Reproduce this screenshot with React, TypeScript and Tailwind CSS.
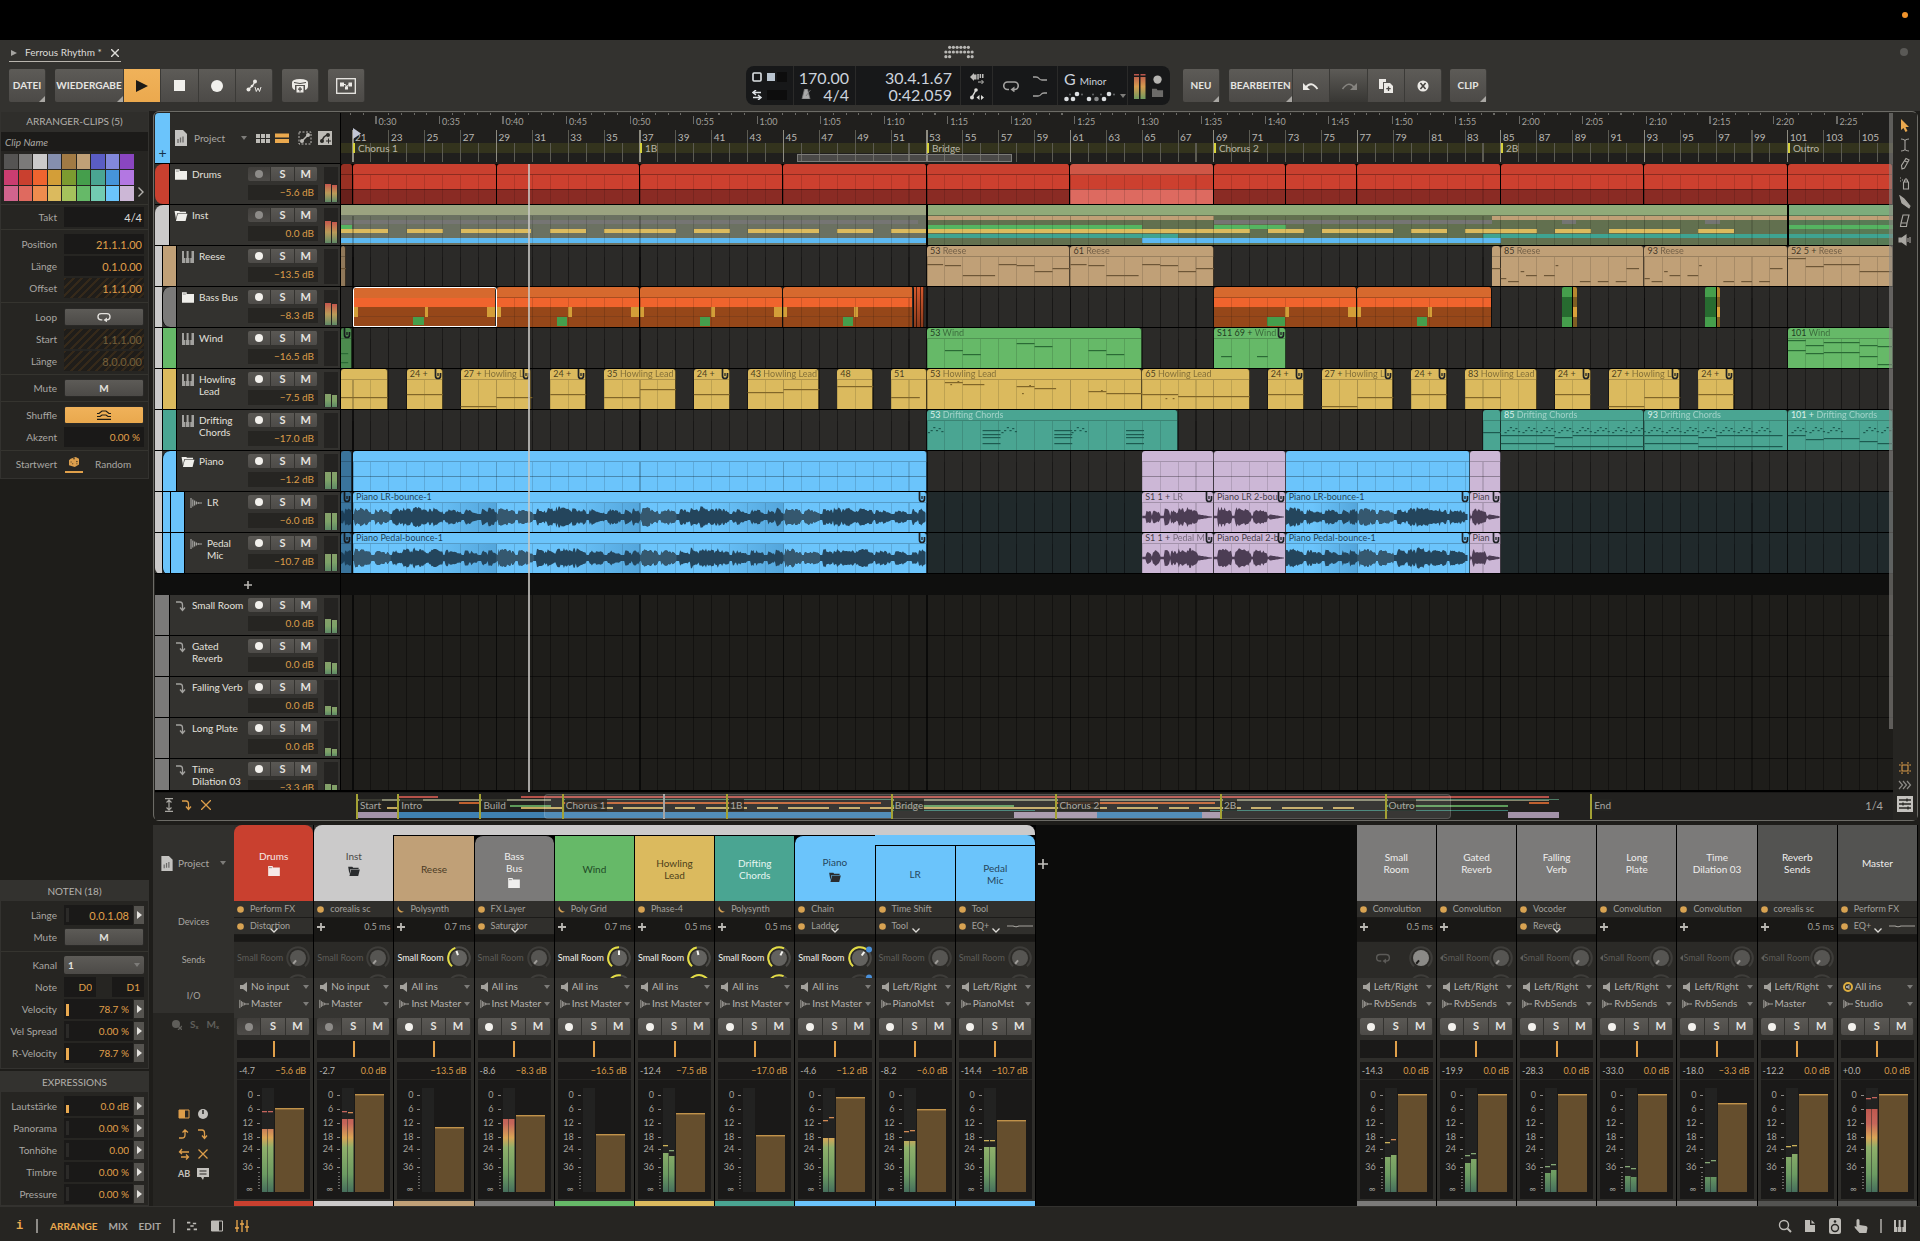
import React from "react";
import clsx from "clsx";

/* ------------------------------------------------------------------ */
/* Timeline geometry                                                    */
/* ------------------------------------------------------------------ */

const FIRST_BAR = 20.33;
const BAR_SPAN = 86.53;
const LAST_BAR = FIRST_BAR + BAR_SPAN;

const pct = (bar: number) => `${((bar - FIRST_BAR) / BAR_SPAN) * 100}%`;
const span = (bars: number) => `${(bars / BAR_SPAN) * 100}%`;

const C = {
  red: "#c9402f",
  silver: "#cbcaca",
  tan: "#c0a077",
  gray: "#7b7a79",
  green: "#66b968",
  yellow: "#dbba5e",
  teal: "#4aa592",
  blue: "#6bc4fb",
  lilac: "#ccb7d6",
  dark: "#535351",
};

interface Clip {
  from: number;
  to: number;
  num?: string;
  name?: string;
  color?: string;
  dim?: boolean;
  clip?: boolean;
}

type Note = [number, number, number];

/* ------------------------------------------------------------------ */
/* Icons                                                                */
/* ------------------------------------------------------------------ */

type IconProps = { className?: string };

const Folder = ({ className = "w-3.5 h-3" }: IconProps) => (
  <svg viewBox="0 0 14 12" className={className} fill="currentColor">
    <path d="M0 0h5.500v1.800h8.500V12H0z" />
    <path d="M1 2h3.500" stroke="#333" strokeWidth="0.600" />
  </svg>
);

const FolderOpen = ({ className = "w-3.5 h-3" }: IconProps) => (
  <svg viewBox="0 0 14 12" className={className} fill="currentColor">
    <path d="M0 1h5l1 1h6.500v1.500H2.800L1.500 10z" />
    <path d="M3.500 4.200H14L12 12H1.500z" />
  </svg>
);

const Keys = ({ className = "w-3 h-3" }: IconProps) => (
  <svg viewBox="0 0 12 12" className={className} fill="currentColor">
    <path d="M0 0h2v7h1v5H0zM3.600 7h1.200v5H3.600zM4.600 0h2v7h.8v5H4V7h.6zM9.500 0H12v12H8.300V7h1.200z" />
  </svg>
);

const Wave = ({ className = "w-3 h-3" }: IconProps) => (
  <svg viewBox="0 0 12 12" className={className} stroke="currentColor" strokeWidth="1.200">
    <path d="M1 1v10M2.800 2.500v7M4.600 3.500v5M6.400 4.500v3M8.200 5v2M9 6h3" />
  </svg>
);

const Return = ({ className = "w-3 h-3" }: IconProps) => (
  <svg viewBox="0 0 12 12" className={className} fill="none" stroke="currentColor" strokeWidth="1.300">
    <path d="M1 2h4q2.500 0 2.500 3v5M5 7.500L7.500 10.500 10 7.500" />
  </svg>
);

const LoopIcon = ({ className = "w-4 h-3" }: IconProps) => (
  <svg viewBox="0 0 16 12" className={className} fill="none" stroke="currentColor" strokeWidth="1.600">
    <path d="M6 9.500H4.500a3.500 3.500 0 0 1 0-7.500h7a3.500 3.500 0 0 1 0 7.500H10" />
    <path d="M11.500 6.500v6L7.500 9.500z" fill="currentColor" stroke="none" />
  </svg>
);

const ProjectIcon = ({ className = "w-3.5 h-4" }: IconProps) => (
  <svg viewBox="0 0 14 16" className={className} fill="#c4c3c0">
    <path d="M1 0h8l4 4v12H1z" />
    <path d="M4 9v4M6.500 7.500v5M9 6.500v6" stroke="#6a6967" strokeWidth="1.300" />
  </svg>
);

const Caret = () => (
  <svg viewBox="0 0 6 4" className="h-1 w-1.5 shrink-0" fill="#7d7c79">
    <path d="M0 0h6L3 4z" />
  </svg>
);

const Speaker = ({ className = "h-2.5 w-2" }: IconProps) => (
  <svg viewBox="0 0 8 10" className={className} fill="currentColor">
    <path d="M0 3h3l4-3v10L3 7H0z" />
  </svg>
);

const DotsLogo = () => {
  const rows = ["01111110", "11111111", "11000011"];
  return (
    <svg viewBox="0 0 32 16" className="h-4 w-[30px]" fill="#b9b8b5">
      {rows.map((row, y) =>
        row.split("").map((c, x) => c === "1" && <circle key={`${x}${y}`} cx={2 + x * 4} cy={3 + y * 5} r={1.7} />)
      )}
    </svg>
  );
};

/* ------------------------------------------------------------------ */
/* Header                                                               */
/* ------------------------------------------------------------------ */

const TOOL_BTN =
  "flex h-[33px] items-center justify-center border-r border-[#3b3a37] bg-linear-to-b from-[#5d5b57] to-[#4c4a47] text-[10px] font-bold text-[#e6e5e2]";

const ToolButton: React.FC<{ label: string; className?: string; corner?: boolean; children?: React.ReactNode }> = ({
  label,
  className,
  corner,
  children,
}) => (
  <button aria-label={label} className={clsx(TOOL_BTN, "relative", className)}>
    {children ?? label}
    {corner && (
      <svg viewBox="0 0 6 6" className="absolute right-0 bottom-0 h-1.5 w-1.5" fill="#a9a7a3">
        <path d="M6 0v6H0z" />
      </svg>
    )}
  </button>
);

const Display: React.FC = () => (
  <div className="flex h-[39px] items-stretch rounded-lg bg-[#171819] text-base leading-[17px] text-[#ccd3dc]">
    <div className="flex w-12 flex-col justify-center gap-2 border-r border-[#2a2a29] pl-1.5">
      <svg viewBox="0 0 36 10" className="h-2.5 w-9">
        <rect x="1" y="1" width="8" height="8" rx="1" fill="none" stroke="#dfe3e6" strokeWidth="1.600" />
        <rect x="15" y="1" width="8" height="8" fill="#b9c4cf" />
        <rect x="25" y="0" width="10" height="10" fill="#0d0d0d" />
      </svg>
      <svg viewBox="0 0 36 10" className="h-2.5 w-9">
        <path d="M9 2.500H2M4 0L1 2.500 4 5M1 7.500h8M6 5l3 2.500L6 10" fill="none" stroke="#dfe3e6" strokeWidth="1.500" />
        <rect x="15" y="0" width="20" height="10" fill="#0d0d0d" />
      </svg>
    </div>
    <div className="flex w-[62px] flex-col justify-center border-r border-[#2a2a29] pr-1.5 text-right">
      <span>170.00</span>
      <span className="flex items-center justify-end gap-3">
        <svg viewBox="0 0 10 10" className="h-2.5 w-2.5" fill="#aaa">
          <path d="M3.500 0h3L9 10H1zM5 7L9.500 1" stroke="#777" strokeWidth="0.800" />
        </svg>
        4/4
      </span>
    </div>
    <div className="flex w-[105px] flex-col justify-center border-r border-[#2a2a29] pr-2 text-right">
      <span>30.4.1.67</span>
      <span>0:42.059</span>
    </div>
    <div className="flex w-8 flex-col items-center justify-center gap-1 border-r border-[#2a2a29]">
      <svg viewBox="0 0 14 12" className="h-3 w-3.5" fill="#bdbcb9">
        <path d="M0 5l4-4v8zM4 2.500h2.500v5H4zM7.300 2h1.500v5.500H7.300zM9.600 2h1.500v4H9.600zM12 2h1.500v4H12z" />
        <path d="M8 10h5M11.500 8l2 2-2 2" fill="none" stroke="#bdbcb9" />
      </svg>
      <svg viewBox="0 0 14 12" className="h-3 w-3.5" fill="#dcdbd8">
        <path d="M1.500 10L6 2" stroke="#dcdbd8" strokeWidth="1.500" />
        <circle cx="2" cy="9.500" r="2" />
        <circle cx="6" cy="2" r="1.800" />
        <path d="M6.500 9.500l3-2.500v5zM14 9.500L11 7v5z" />
      </svg>
    </div>
    <div className="flex w-[65px] items-center justify-between border-r border-[#2a2a29] px-2.5 text-[#a4a3a1]">
      <LoopIcon />
      <svg viewBox="0 0 14 26" className="h-[26px] w-3.5" fill="none" stroke="currentColor" strokeWidth="1.300">
        <path d="M0 4h3q2 0 3 1.500T9 7h5M0 23h5q2 0 3-1.500T11 20h3" />
      </svg>
    </div>
    <div className="flex w-[70px] flex-col justify-center border-r border-[#2a2a29] pl-1.5">
      <span>
        G <span className="text-[10px]">Minor</span>
      </span>
      <span className="flex items-center gap-1">
        <svg viewBox="0 0 52 12" className="h-3 w-[52px]" fill="#dcdfe2">
          {[2.5, 9, 25, 40].map((x) => (
            <circle key={x} cx={x} cy={9} r={2.3} />
          ))}
          <circle cx={32.5} cy={9} r={2.3} fill="#88898a" />
          <circle cx={13} cy={4} r={2.3} />
          <circle cx={45} cy={4} r={2.3} />
          {[6, 18, 29, 37, 50].map((x) => (
            <circle key={x} cx={x} cy={4.5} r={1} fill="#66686a" />
          ))}
        </svg>
        <Caret />
      </span>
    </div>
    <div className="flex w-[42px] items-center justify-between px-1.5">
      <svg viewBox="0 0 12 26" className="h-[26px] w-3">
        <defs>
          <linearGradient id="dispMeter" x2="0" y2="1">
            <stop offset="0" stopColor="#b9534c" />
            <stop offset="0.500" stopColor="#d59b4e" />
            <stop offset="1" stopColor="#6f9b5f" />
          </linearGradient>
        </defs>
        <path d="M0 4h5v22H0zM6.500 4h5v22h-5zM0 1h5v1.500H0zM6.500 1h5v1.500h-5z" fill="url(#dispMeter)" />
      </svg>
      <svg viewBox="0 0 13 26" className="h-[26px] w-3">
        <circle cx="6" cy="6" r="4.500" fill="#b5b4b1" />
        <path d="M0 16h5l1 1.500h6V25H0z" fill="#6c6b69" />
      </svg>
    </div>
  </div>
);

const Header: React.FC = () => (
  <header className="flex h-[71px] shrink-0 flex-col bg-[#33322f] pt-1">
    <div className="grid h-[22px] grid-cols-[1fr_auto_1fr] items-start pr-3 pl-[9px]">
      <div className="flex h-[18px] w-28 items-center gap-2 border-b border-[#b9b5ae] pl-0.5 text-[10px] text-[#dddcd8]">
        <svg viewBox="0 0 6 6" className="h-1.5 w-1.5" fill="#a5a4a1">
          <path d="M0 0l6 3-6 3z" />
        </svg>
        <span className="whitespace-nowrap">Ferrous Rhythm *</span>
        <button aria-label="Close project" className="ml-px text-[#dddcd8]">
          <svg viewBox="0 0 8 8" className="h-2 w-2" stroke="currentColor" strokeWidth="1.400">
            <path d="M0 0l8 8M8 0L0 8" />
          </svg>
        </button>
      </div>
      <DotsLogo />
      <span className="mt-1 h-2 w-2 justify-self-end rounded-full bg-[#5a5956]" />
    </div>
    <div className="grid grid-cols-[746px_auto_1fr] items-center">
      <div className="flex items-center pl-[9px]">
        <ToolButton label="DATEI" corner className="w-[37px] rounded-xs" />
        <ToolButton label="WIEDERGABE" corner className="ml-[9px] w-[69px] rounded-l-xs" />
        <ToolButton label="Play" className="w-[37px] from-[#f0b25a] to-[#eba94e]">
          <svg viewBox="0 0 12 12" className="h-3 w-3" fill="#1c1a16">
            <path d="M0 0l12 6-12 6z" />
          </svg>
        </ToolButton>
        <ToolButton label="Stop" className="w-[38px]">
          <span className="h-[11px] w-[11px] bg-[#f1f0ec]" />
        </ToolButton>
        <ToolButton label="Record" className="w-[37px]">
          <span className="h-3 w-3 rounded-full bg-[#f1f0ec]" />
        </ToolButton>
        <ToolButton label="Automation write" className="w-[37px] rounded-r-xs">
          <svg viewBox="0 0 16 14" className="h-3.5 w-4" fill="#eceae6">
            <path d="M2 11l5-5 2-3.500" fill="none" stroke="#eceae6" strokeWidth="1.300" />
            <circle cx="2.500" cy="10.500" r="2" />
            <circle cx="6" cy="7" r="1.300" />
            <circle cx="9" cy="2.500" r="2" />
            <path d="M9 8l1.300 4.500L12 9l1.500 3.500L15 8" fill="none" stroke="#eceae6" />
          </svg>
        </ToolButton>
        <ToolButton label="Overdub" className="ml-[9px] w-[37px] rounded-xs">
          <svg viewBox="0 0 18 14" className="h-3.5 w-[18px]" fill="#eceae6">
            <path d="M1 3.500Q1 0 9 0t8 3.500V7q0 3-3 4V6H4v5Q1 10 1 7z" />
            <path d="M3 3.500q6 2 12 0" stroke="#4c4a47" fill="none" />
            <path d="M5.500 7h7v6.500h-7z" />
            <path d="M9 8v4.500M7 10.200h4" stroke="#4c4a47" strokeWidth="1.200" />
          </svg>
        </ToolButton>
        <ToolButton label="Mappings" className="ml-[9px] w-[37px] rounded-xs">
          <svg viewBox="0 0 20 16" className="h-4 w-5" fill="#eceae6">
            <rect x="0.700" y="0.700" width="18.600" height="14.600" fill="none" stroke="#eceae6" strokeWidth="1.300" />
            <path d="M4 4.500h4v4H4zM9 8.500h3v3H9zM12.500 4.500h3.500v4h-3.500z" />
            <path d="M8 6.500h1.500l1 2.500 2-2.500" stroke="#eceae6" fill="none" />
          </svg>
        </ToolButton>
      </div>
      <Display />
      <div className="flex items-center pl-[13px]">
        <ToolButton label="NEU" corner className="w-[37px] rounded-xs" />
        <ToolButton label="BEARBEITEN" corner className="ml-[9px] w-16 rounded-l-xs" />
        <ToolButton label="Undo" className="w-[37px]">
          <svg viewBox="0 0 16 10" className="h-2.5 w-4" fill="none" stroke="#eceae6" strokeWidth="1.800">
            <path d="M2.500 7Q8-1 14.500 8" />
            <path d="M0 2v7h7z" fill="#eceae6" stroke="none" />
          </svg>
        </ToolButton>
        <ToolButton label="Redo" className="w-[38px] from-[#3c3b38] to-[#383734]">
          <svg viewBox="0 0 16 10" className="h-2.5 w-4" fill="none" stroke="#85837f" strokeWidth="1.600">
            <path d="M13.500 7Q8-1 1.500 8" />
            <path d="M16 2v7H9z" fill="#85837f" stroke="none" />
          </svg>
        </ToolButton>
        <ToolButton label="Duplicate" className="w-[37px]">
          <svg viewBox="0 0 14 14" className="h-3.5 w-3.5" fill="#eceae6">
            <path d="M0 0h7v3H4v7H0z" />
            <path d="M5 4h6l3 3v7H5z" />
            <path d="M9.500 7.500v4.500M7.300 9.700h4.400" stroke="#4c4a47" strokeWidth="1.300" />
          </svg>
        </ToolButton>
        <ToolButton label="Delete" className="w-[37px] rounded-r-xs">
          <svg viewBox="0 0 14 14" className="h-3 w-3">
            <circle cx="7" cy="7" r="6.500" fill="#eceae6" />
            <path d="M4 3.500l6 7M10 3.500l-6 7" stroke="#45433f" strokeWidth="1.800" />
          </svg>
        </ToolButton>
        <ToolButton label="CLIP" corner className="ml-2 w-[37px] rounded-xs" />
      </div>
    </div>
  </header>
);

/* ------------------------------------------------------------------ */
/* Inspector                                                            */
/* ------------------------------------------------------------------ */

const PALETTE = [
  "#555453", "#7b7a79", "#cbcaca", "#858fae", "#a17a44", "#c0a077", "#5a5dc5", "#8288dc", "#8a46c0",
  "#ca3d70", "#c9402f", "#ef642f", "#d39e38", "#7c9b30", "#459e4c", "#4aa592", "#4694da", "#b377e2",
  "#d0648d", "#df6a5f", "#ee8c4e", "#dbba5e", "#a5c25c", "#66b968", "#72cbb2", "#6bc4fb", "#ccb7d6",
];

const HATCH = "bg-[repeating-linear-gradient(135deg,#35291a_0px,#35291a_2px,#1f1d1a_2px,#1f1d1a_6px)]";

const Row: React.FC<{ label: string; children: React.ReactNode }> = ({ label, children }) => (
  <label className="flex h-[22px] items-center text-[#a9a7a2]">
    <span className="w-14 shrink-0 text-right">{label}</span>
    <span className="ml-[7px] flex min-w-0 flex-1 items-center">{children}</span>
  </label>
);

const Value: React.FC<{
  value: string;
  hatch?: boolean;
  dim?: boolean;
  white?: boolean;
  mono?: boolean;
  inset?: boolean;
}> = ({ value, hatch, dim, white, mono, inset }) => (
  <input
    defaultValue={value}
    className={clsx(
      "h-5 w-full min-w-0 flex-1 text-right outline-none",
      inset ? "pr-1" : "pr-0.5",
      mono ? "text-[11px]" : "text-[10px]",
      hatch ? HATCH : "bg-[#1a1918]",
      dim ? "text-[#75603a]" : white ? "text-[#dedcd8]" : "text-[#e0a04a]"
    )}
  />
);

const PANEL_BTN =
  "flex h-[18px] flex-1 items-center justify-center rounded-xs border border-[#2a2927] bg-linear-to-b from-[#5d5b57] to-[#4c4a47] font-bold text-[#e4e2de]";

const Divider = () => <hr className="border-t border-[#35342f]" />;

const Stepper: React.FC<{ label: string }> = ({ label }) => (
  <button aria-label={`${label} modulate`} className="ml-px flex h-[18px] w-2.5 shrink-0 items-center justify-center bg-[#55534f]">
    <svg viewBox="0 0 5 8" className="h-2 w-[5px]" fill="#e4e2de">
      <path d="M0 0l5 4-5 4z" />
    </svg>
  </button>
);

const StepRow: React.FC<{ label: string; value: string; bar?: string; mono?: boolean }> = ({ label, value, bar, mono }) => (
  <Row label={label}>
    <span className="flex h-5 w-1.5 shrink-0 items-center bg-[#1a1918] pl-0.5">
      <span className={clsx("flex h-3.5 w-[3px] items-end", bar ? "" : "bg-[#2b2a28]")}>
        {bar && <span className={clsx("w-[3px] bg-[#e9a94f]", bar)} />}
      </span>
    </span>
    <Value value={value} mono={mono} inset />
    <Stepper label={label} />
  </Row>
);

const Inspector: React.FC = () => (
  <aside className="flex w-[153px] shrink-0 flex-col justify-between bg-[#1e1d1a] text-[10px]">
    <section className="mr-1 border border-[#33322f] bg-[#262522]">
      <h2 className="bg-[#2f2e2b] pt-[3px] pb-1 text-center leading-[13px] text-[#b3b1ad]">ARRANGER-CLIPS (5)</h2>
      <input
        aria-label="Clip Name"
        placeholder="Clip Name"
        className="h-[19px] w-full bg-[#1c1b19] px-1 text-[10px] italic outline-none placeholder:text-[#a9a7a2]"
      />
      <div className="flex items-end gap-1 pt-[3px] pb-[3px] pl-[3px]">
        <div className="grid w-[130px] grid-cols-9 gap-px">
          {PALETTE.map((color) => (
            <button key={color} aria-label={`Color ${color}`} className="h-[15px]" style={{ backgroundColor: color }} />
          ))}
        </div>
        <svg viewBox="0 0 6 10" className="mb-1 h-2.5 w-1.5" fill="none" stroke="#b3b1ad" strokeWidth="1.400">
          <path d="M0.500 0.500L5 5 0.500 9.500" />
        </svg>
      </div>
      <Divider />
      <div className="py-px pr-1">
        <Row label="Takt"><Value value="4/4" white mono /></Row>
      </div>
      <Divider />
      <div className="py-[3px] pr-1">
        <Row label="Position"><Value value="21.1.1.00" mono /></Row>
        <Row label="Länge"><Value value="0.1.0.00" mono /></Row>
        <Row label="Offset"><Value value="1.1.1.00" hatch mono /></Row>
      </div>
      <Divider />
      <div className="pt-[3px] pr-1 pb-0.5">
        <Row label="Loop">
          <button aria-label="Loop" className={PANEL_BTN}><LoopIcon className="h-2.5 w-4" /></button>
        </Row>
        <Row label="Start"><Value value="1.1.1.00" hatch dim mono /></Row>
        <Row label="Länge"><Value value="8.0.0.00" hatch dim mono /></Row>
      </div>
      <Divider />
      <div className="py-0.5 pr-1">
        <Row label="Mute"><button className={PANEL_BTN}>M</button></Row>
      </div>
      <Divider />
      <div className="py-0.5 pr-1">
        <Row label="Shuffle">
          <button aria-label="Shuffle" className={clsx(PANEL_BTN, "from-[#f0b25a] to-[#e9a84d]")}>
            <svg viewBox="0 0 16 10" className="h-2.5 w-4" fill="none" stroke="#1f1c16" strokeWidth="1.200">
              <path d="M1 3.500h2l3-2.500h4l3 2.500h2M1 6.500h3l2-1.500h4l2 1.500h3M1 9.300h14" />
            </svg>
          </button>
        </Row>
        <Row label="Akzent"><Value value="0.00 %" inset /></Row>
      </div>
      <Divider />
      <div className="flex h-[27px] items-center text-[#a9a7a2]">
        <span className="w-14 text-right">Startwert</span>
        <button aria-label="Roll seed" className="ml-2 flex w-[18px] flex-col items-center border-b-2 border-[#e0a04a] pb-1">
          <svg viewBox="0 0 12 12" className="h-2.5 w-2.5" fill="#dc9f4d">
            <path d="M2 2l6-2 4 2v7l-5 3-7-2V4z" />
            <path d="M2 6h1M4 8h1M9 5l1 1M9 8h1M5 2h2" stroke="#2a251c" strokeWidth="1.300" />
          </svg>
        </button>
        <button className="ml-3">Random</button>
      </div>
    </section>

    <div className="mr-1 flex flex-col gap-0.5">
      <section className="border border-[#33322f] bg-[#262522]">
        <h2 className="bg-[#33322f] py-1 text-center leading-3 text-[#b3b1ad]">NOTEN (18)</h2>
        <div className="py-[3px] pr-1">
          <StepRow label="Länge" value="0.0.1.08" mono />
          <Row label="Mute"><button className={PANEL_BTN}>M</button></Row>
        </div>
        <Divider />
        <div className="pt-0.5 pr-1 pb-1">
          <Row label="Kanal">
            <select className="h-[18px] w-full appearance-none rounded-xs bg-linear-to-b from-[#5d5b57] to-[#4c4a47] pl-1 font-bold text-[#e4e2de] outline-none">
              <option>1</option>
            </select>
            <span className="-ml-2.5 flex"><Caret /></span>
          </Row>
          <div className="flex h-[22px] items-center text-[#a9a7a2]">
            <span className="w-14 text-right">Note</span>
            <input aria-label="Lowest note" defaultValue="D0" className="ml-[7px] h-5 w-8 bg-[#1a1918] pr-1 text-right text-[#e0a04a] outline-none" />
            <input aria-label="Highest note" defaultValue="D1" className="ml-4 h-5 w-8 bg-[#1a1918] pr-1 text-right text-[#e0a04a] outline-none" />
          </div>
          <StepRow label="Velocity" value="78.7 %" bar="h-3" />
          <StepRow label="Vel Spread" value="0.00 %" />
          <StepRow label="R-Velocity" value="78.7 %" bar="h-3" />
        </div>
      </section>
      <section className="border border-[#33322f] bg-[#262522]">
        <h2 className="bg-[#33322f] py-1 text-center leading-3 text-[#b3b1ad]">EXPRESSIONS</h2>
        <div className="pt-[3px] pr-1">
          <StepRow label="Lautstärke" value="0.0 dB" bar="h-2" />
          <StepRow label="Panorama" value="0.00 %" />
          <StepRow label="Tonhöhe" value="0.00" />
          <StepRow label="Timbre" value="0.00 %" />
          <StepRow label="Pressure" value="0.00 %" />
        </div>
      </section>
    </div>
  </aside>
);

/* ------------------------------------------------------------------ */
/* Track headers                                                        */
/* ------------------------------------------------------------------ */

interface Track {
  name: string;
  db: string;
  color: string;
  level: number;
  icon: "folder" | "open" | "keys" | "wave" | "return";
  unarmed?: boolean;
  first?: boolean;
  last?: boolean;
  meter?: number;
  hot?: boolean;
}

const TRACKS: Track[] = [
  { name: "Drums", db: "−5.6 dB", color: C.red, level: 0, icon: "folder", unarmed: true, meter: 52, hot: true, first: true },
  { name: "Inst", db: "0.0 dB", color: C.silver, level: 0, icon: "open", unarmed: true, meter: 62, hot: true, first: true },
  { name: "Reese", db: "−13.5 dB", color: C.tan, level: 1, icon: "keys" },
  { name: "Bass Bus", db: "−8.3 dB", color: C.gray, level: 1, icon: "folder", meter: 62, hot: true, first: true },
  { name: "Wind", db: "−16.5 dB", color: C.green, level: 1, icon: "keys" },
  { name: "Howling Lead", db: "−7.5 dB", color: C.yellow, level: 1, icon: "keys", meter: 36 },
  { name: "Drifting Chords", db: "−17.0 dB", color: C.teal, level: 1, icon: "keys" },
  { name: "Piano", db: "−1.2 dB", color: C.blue, level: 1, icon: "open", meter: 50, first: true },
  { name: "LR", db: "−6.0 dB", color: C.blue, level: 2, icon: "wave", meter: 50 },
  { name: "Pedal Mic", db: "−10.7 dB", color: C.blue, level: 2, icon: "wave", meter: 50, last: true },
];

const RETURNS: Track[] = [
  { name: "Small Room", db: "0.0 dB", color: C.gray, level: 0, icon: "return", meter: 40 },
  { name: "Gated Reverb", db: "0.0 dB", color: C.gray, level: 0, icon: "return", meter: 34 },
  { name: "Falling Verb", db: "0.0 dB", color: C.gray, level: 0, icon: "return", meter: 26 },
  { name: "Long Plate", db: "0.0 dB", color: C.gray, level: 0, icon: "return", meter: 22 },
  { name: "Time Dilation 03", db: "−3.3 dB", color: C.gray, level: 0, icon: "return", meter: 36 },
];

const ICONS = {
  folder: <Folder className="h-[11px] w-3" />,
  open: <FolderOpen className="h-[11px] w-3.5" />,
  keys: <Keys className="h-3 w-3 text-[#a3a29f]" />,
  wave: <Wave className="h-3 w-3 text-[#a3a29f]" />,
  return: <Return className="h-3 w-3 text-[#a3a29f]" />,
};

const ArmSoloMute: React.FC<{ name: string; unarmed?: boolean; tall?: boolean }> = ({ name, unarmed, tall }) => {
  const cell = clsx(
    "flex flex-1 items-center justify-center border-r border-[#33322f] bg-linear-to-b from-[#5a5854] to-[#4d4b48] text-[11px] font-bold text-[#e6e4e0]",
    tall ? "h-[17px]" : "h-3.5"
  );
  return (
    <div className="flex">
      <button aria-label={`Arm ${name}`} className={clsx(cell, "rounded-l-xs", unarmed && "from-[#413f3c] to-[#3c3b38]")}>
        <span className={clsx("h-2 w-2 rounded-full", unarmed ? "bg-[#8d8b88]" : "bg-[#f3f1ed]")} />
      </button>
      <button aria-label={`Solo ${name}`} className={cell}>S</button>
      <button aria-label={`Mute ${name}`} className={clsx(cell, "rounded-r-xs")}>M</button>
    </div>
  );
};

const TrackHeader: React.FC<{ track: Track; clipped?: boolean }> = ({ track, clipped }) => {
  const { name, db, color, level, icon, meter = 0, hot } = track;
  const top = hot ? "from-[#c4554c] via-[#b99a58]" : "from-[#86a06a] via-[#7da268]";
  return (
    <div className={clsx("flex overflow-hidden border-b border-black bg-[#33322f]", clipped ? "h-[31px] border-b-0" : "h-[41px]")}>
      {level > 0 && <span className={clsx("-mb-px w-[7px] shrink-0 bg-[#cbcaca]", track.last && "rounded-bl-md")} />}
      {level > 1 && (
        <span className={clsx("-mb-px w-2 shrink-0 border-l border-black bg-[#6bc4fb]", track.last && "rounded-bl-md")} />
      )}
      <span
        className={clsx(
          "w-[15px] shrink-0 border-r border-black",
          level > 0 && "border-l",
          track.first && "rounded-tl-lg",
          icon === "folder" && "rounded-bl-lg",
          icon === "open" && "-mb-px"
        )}
        style={{ backgroundColor: color }}
      />
      <span className="ml-1 flex w-3.5 shrink-0 justify-center pt-[5px] text-[#efeeea]">{ICONS[icon]}</span>
      <span className="ml-1 min-w-0 flex-1 pt-1 text-[10px] leading-3 text-[#e3e1dd]">{name}</span>
      <div className="w-[70px] shrink-0 pt-[3px]">
        <ArmSoloMute name={name} unarmed={track.unarmed} />
        <div className="mt-1 h-[15px] bg-[#262522] pr-1 text-right text-[10px] leading-[15px] text-[#dc9d4a]">{db}</div>
      </div>
      <div className="mt-[3px] mr-0.5 ml-1.5 flex h-[35px] w-3.5 shrink-0 items-end gap-px bg-[#242321] px-px">
        <span className={clsx("flex-1 bg-linear-to-b to-[#5e8a66]", top)} style={{ height: `${meter}%` }} />
        <span className={clsx("flex-1 bg-linear-to-b to-[#5e8a66]", top)} style={{ height: `${meter && meter - 2}%` }} />
      </div>
    </div>
  );
};

/* ------------------------------------------------------------------ */
/* Timeline lanes                                                       */
/* ------------------------------------------------------------------ */

const BARS = Array.from({ length: 86 }, (_, i) => 21 + i);

const Grid: React.FC<{ faint?: boolean }> = ({ faint }) => (
  <svg
    viewBox={`${FIRST_BAR} 0 ${BAR_SPAN} 41`}
    preserveAspectRatio="none"
    className="pointer-events-none absolute inset-0 h-full w-full"
    shapeRendering="crispEdges"
  >
    {BARS.map((b) => {
      const strong = (b - 21) % 8 === 0;
      const opacity = faint ? (strong ? 0.22 : 0.13) : strong ? 0.65 : 0.35;
      return <rect key={b} x={b - 0.03} y={faint ? 11 : 0} width={0.06} height={41} fill="#000" opacity={opacity} />;
    })}
  </svg>
);

const Notes: React.FC<{ notes: Note[]; color: string }> = ({ notes, color }) => (
  <svg
    viewBox={`${FIRST_BAR} 0 ${BAR_SPAN} 40`}
    preserveAspectRatio="none"
    className="pointer-events-none absolute inset-0 h-full w-full"
  >
    {notes.map(([at, len, y], i) => (
      <rect key={i} x={at} y={y} width={len} height={1.2} fill={color} />
    ))}
  </svg>
);

const PaperClip = () => (
  <svg viewBox="0 0 8 11" className="absolute top-0 right-0 h-[11px] w-2" fill="none" stroke="#1f2226" strokeWidth="1.700">
    <path d="M1.500 0v7q0 2.500 2.500 2.500T6.500 7V4" />
    <path d="M4 4v3" strokeWidth="1.300" />
  </svg>
);

const ClipBox: React.FC<{ clip: Clip; color: string; light?: boolean; split?: boolean }> = ({ clip, color, light, split }) => (
  <div
    className={clsx("absolute inset-y-0 overflow-hidden rounded-t-[3px] border-r border-black/60", clip.dim && "brightness-75")}
    style={{ left: pct(clip.from), width: span(Math.min(clip.to, LAST_BAR) - clip.from), backgroundColor: clip.color ?? color }}
  >
    <div
      className={clsx(
        "h-[11px] border-b border-black/20 pl-[3px] text-[9px] leading-[10px] whitespace-nowrap",
        light ? "text-[#d9f0ea]" : "text-black/70"
      )}
    >
      {clip.num && <span>{clip.num} </span>}
      <span className={clsx(clip.num && "opacity-60")}>{clip.name}</span>
      {clip.clip && <PaperClip />}
    </div>
    {split && <div className="mt-3.5 border-t border-black/30" />}
  </div>
);

const Lane: React.FC<{ bg?: string; children?: React.ReactNode }> = ({ bg = "bg-[#2b2a28]", children }) => (
  <div className={clsx("relative h-[41px] overflow-hidden border-b border-black", bg)}>{children}</div>
);

const c = (from: number, to: number, num?: string, name?: string, extra: Partial<Clip> = {}): Clip => ({
  from,
  to,
  num,
  name,
  ...extra,
});

const REESE = [
  c(FIRST_BAR, 20.6, undefined, undefined, { dim: true }),
  c(53, 61, "53", "Reese"),
  c(61, 69, "61", "Reese"),
  c(84.5, 85),
  c(85, 93, "85", "Reese"),
  c(93, 101, "93", "Reese"),
  c(101, 107, "52 5 +", "Reese"),
];

const reeseA = (at: number): Note[] => [
  [at, 0.9, 18], [at + 1, 0.9, 19], [at + 2, 1.8, 29], [at + 4, 1, 18], [at + 5, 1, 19], [at + 6, 1, 25], [at + 7, 1, 22],
];
const reeseB = (at: number): Note[] => [
  [at, 0.3, 32], [at + 0.4, 0.6, 35], [at + 1.1, 0.2, 25], [at + 1.4, 0.6, 29], [at + 2.4, 0.6, 29], [at + 3.05, 0.15, 19],
  [at + 4.4, 0.6, 35], [at + 5.4, 0.6, 35], [at + 6.4, 0.6, 35], [at + 7, 0.7, 22],
];
const REESE_NOTES: Note[] = [
  [FIRST_BAR, 0.27, 22], ...reeseA(53), ...reeseA(61), [84.5, 0.5, 22], ...reeseB(85), ...reeseB(93),
  [101, 1, 12], [102, 1, 20], [103, 2, 18], [105, 2, 25],
];

const WIND = [
  c(FIRST_BAR, 20.95, undefined, undefined, { clip: true, dim: true }),
  c(53, 65, "53", "Wind"),
  c(69, 73, "S11 69 +", "Wind", { clip: true }),
  c(101, 107, "101", "Wind"),
];
const WIND_NOTES: Note[] = [
  [FIRST_BAR, 0.4, 25], [FIRST_BAR, 0.4, 34],
  [54, 1, 22], [55, 1, 26], [58, 1, 15], [59, 1, 18], [62, 1, 22], [63, 1, 26], [69.4, 0.6, 28], [71.4, 0.6, 28],
  [101, 1, 12], [101, 1, 22], [102, 1, 17], [102, 1, 25], [103, 2, 14], [103, 2, 24], [105, 1, 17], [105, 1, 28], [106, 1, 18], [106, 1, 36],
];

const HOWLING = [
  c(FIRST_BAR, 22.95),
  c(24, 26, "24 +", undefined, { clip: true }),
  c(27, 30.95, "27 +", "Howling L", { clip: true }),
  c(32, 34, "24 +", undefined, { clip: true }),
  c(35, 39, "35", "Howling Lead"),
  c(40, 42, "24 +", undefined, { clip: true }),
  c(43, 47, "43", "Howling Lead"),
  c(48, 50, "48"),
  c(51, 53, "51"),
  c(53, 65, "53", "Howling Lead"),
  c(65, 71, "65", "Howling Lead"),
  c(72, 74, "24 +", undefined, { clip: true }),
  c(75, 79, "27 +", "Howling L", { clip: true }),
  c(80, 82, "24 +", undefined, { clip: true }),
  c(83, 87, "83", "Howling Lead"),
  c(88, 90, "24 +", undefined, { clip: true }),
  c(91, 95, "27 +", "Howling L", { clip: true }),
  c(96, 98, "24 +", undefined, { clip: true }),
];
const HOWLING_NOTES: Note[] = [
  [FIRST_BAR, 2.6, 28], [24, 2, 25], [27, 2, 37], [29, 2, 28], [32, 2, 25], [35, 2, 28], [37, 2, 20], [40, 2, 25],
  [43, 2, 23], [45, 2, 20], [48, 2, 17], [51, 1.6, 28], [54, 1, 13], [54.3, 0.1, 15], [54.7, 0.1, 12], [55, 1.2, 15],
  [58, 1, 17], [59, 1.2, 19], [58.3, 0.1, 24], [58.7, 0.1, 16], [62, 1, 22], [62.7, 0.1, 21], [63, 2, 24],
  [65, 2, 25], [66.3, 0.1, 29], [66.7, 0.1, 29], [67, 4, 27],
  [72, 2, 25], [75, 2, 37], [77, 2, 28], [80, 2, 25], [83, 2, 28], [88, 2, 25], [91, 2, 37], [93, 2, 28], [96, 2, 25],
];

const DRIFTING = [
  c(53, 67, "53", "Drifting Chords"),
  c(84, 85),
  c(85, 93, "85", "Drifting Chords"),
  c(93, 101, "93", "Drifting Chords"),
  c(101, 107, "101 +", "Drifting Chords"),
];
const sparkle = (at: number): Note[] => [
  [at + 0.05, 0.12, 22], [at + 0.2, 0.12, 20], [at + 0.35, 0.12, 17], [at + 0.5, 0.12, 20], [at + 0.65, 0.12, 18], [at + 0.8, 0.12, 21],
];
const stack = (at: number): Note[] => [[at, 1, 20], [at, 1, 24], [at, 1, 27], [at, 1, 33]];
const DRIFTING_NOTES: Note[] = [
  ...sparkle(53), ...stack(56.1), ...sparkle(57.1), ...stack(60.1), ...sparkle(61), ...stack(64.1),
  [84, 1, 22],
  ...[85, 86, 87, 88, 89, 90, 91, 92, 93, 94, 95, 96, 97, 98, 99, 101, 102, 103, 105, 106].flatMap((b) => sparkle(b + 0.15)),
  [85, 3, 25], [85, 3, 33], [88, 1, 27], [88, 1, 36], [89, 4, 25], [89, 4, 36],
  [93, 3, 25], [93, 3, 33], [96, 1, 27], [96, 1, 36], [97, 3.7, 25], [97, 3.7, 36],
  [101, 1, 25], [102, 1, 29], [103, 2, 28], [105, 1, 31], [106, 1, 33],
];

const PIANO: Clip[] = [
  c(FIRST_BAR, 20.97, undefined, undefined, { dim: true, color: "#4d9ad0" }),
  c(21, 53),
  c(65, 69, undefined, undefined, { color: C.lilac }),
  c(69, 73, undefined, undefined, { color: C.lilac }),
  c(73, 83.25),
  c(83.25, 85, undefined, undefined, { color: C.lilac }),
];
const audioClips = (base: string, s1: string, second: string): Clip[] => [
  c(FIRST_BAR, 20.97, undefined, undefined, { dim: true, clip: true, color: "#4d9ad0" }),
  c(21, 53, undefined, `Piano ${base}-bounce-1`, { clip: true }),
  c(65, 69, "S1 1 +", s1, { color: C.lilac, clip: true }),
  c(69, 73, undefined, second, { color: C.lilac, clip: true }),
  c(73, 83.25, undefined, `Piano ${base}-bounce-1`, { clip: true }),
  c(83.25, 85, undefined, "Pian", { color: C.lilac, clip: true }),
];

// Burst list of one eight bar phrase: start, end, loudness
const PHRASE = [[0.1, 1, 0.95], [1.2, 2, 0.8], [2.2, 2.8, 0.9], [2.8, 3.3, 1], [3.3, 4.2, 1.05], [4.2, 5, 0.95], [5.15, 6, 0.8], [6.2, 6.9, 0.8], [7.15, 7.5, 0.8], [7.55, 8, 0.9]];
const TAIL = [[0.2, 0.5, 0.75], [0.6, 1, 0.8], [1.25, 1.55, 0.85], [1.6, 2, 0.75], [2, 2.5, 0.95], [2.5, 3.1, 1]];
const TAIL_B = [[0.2, 1, 1.05], [1.2, 2.1, 0.95], [2.2, 3, 0.9]];

const noise = (n: number) => {
  const s = Math.sin(n * 12.9898 + 4.1) * 43758.5453;
  return s - Math.floor(s);
};

const wavePath = (from: number, to: number, origin: number, bursts: number[][], period: number, seed: number) => {
  const up: string[] = [];
  const down: string[] = [];
  for (let x = from; x <= to; x += 0.06) {
    const p = (x - origin) % period;
    const grain = noise(Math.round(x * 12) + seed);
    let amp = period === 8 ? 0.3 : 0.12;
    bursts.forEach(([a, b, loud]) => {
      if (p >= a && p < b) {
        const k = (p - a) / (b - a);
        amp = loud * (0.6 + 0.45 * grain) * (1 - 0.35 * k * k);
      }
    });
    if (period === 4 && p > 3.1) amp = Math.max(0.06, 0.3 * (4 - p));
    up.push(`${x.toFixed(2)},${(25 - amp * 10).toFixed(1)}`);
    down.unshift(`${x.toFixed(2)},${(25 + amp * 10).toFixed(1)}`);
  }
  return `M${up.join("L")}L${down.join("L")}Z`;
};

const Waveforms: React.FC<{ seed: number }> = ({ seed }) => (
  <svg
    viewBox={`${FIRST_BAR} 0 ${BAR_SPAN} 40`}
    preserveAspectRatio="none"
    className="pointer-events-none absolute inset-0 h-full w-full"
  >
    <defs>
      <linearGradient id={`tint${seed}`}>
        <stop offset="0" stopColor="#1d5f92" stopOpacity="0" />
        <stop offset="1" stopColor="#1d5f92" stopOpacity="0.300" />
      </linearGradient>
    </defs>
    {[21, 29, 37].map((x) => (
      <rect key={x} x={x + 4} y={11} width={4} height={29} fill={`url(#tint${seed})`} />
    ))}
    <rect x={74.5} y={11} width={2.5} height={29} fill={`url(#tint${seed})`} />
    <path d={wavePath(FIRST_BAR, 20.95, 21 - 8, PHRASE, 8, seed)} fill="#1d3f58" />
    <path d={wavePath(21, 52.95, 21, PHRASE, 8, seed)} fill="#24455c" />
    <path d={wavePath(73, 83.2, 69, PHRASE, 8, seed)} fill="#24455c" />
    {[21, 29, 37, 45, 77].map((x) => (
      <path key={x} d={wavePath(x, x + 2.1, x, PHRASE, 8, seed)} fill="#35586f" />
    ))}
    <path d={wavePath(65, 68.95, 65, TAIL, 4, seed)} fill="#4c3d54" />
    <path d={wavePath(69, 72.95, 69, TAIL_B, 4, seed)} fill="#4c3d54" />
    <path d={wavePath(83.25, 84.95, 81.2, TAIL_B, 4, seed)} fill="#4c3d54" />
  </svg>
);

const DRUM_EDGES = [FIRST_BAR, 21, 29, 37, 45, 53, 61, 69, 73, 77, 85, 93, 101, LAST_BAR];

const DrumsLane = () => (
  <Lane bg="bg-black">
    {DRUM_EDGES.slice(0, -1).map((from, i) => {
      const hot = from === 61;
      return (
        <div
          key={from}
          className={clsx("absolute inset-y-0 overflow-hidden rounded-t-[3px] border-r border-black/80", i === 0 && "brightness-75")}
          style={{ left: pct(from), width: span(DRUM_EDGES[i + 1] - from) }}
        >
          <div className={clsx("h-[11px] border-b border-black/30", hot ? "bg-[#cf5646]" : "bg-[#c9402f]")} />
          <div className="h-3.5 bg-[#cc402f]" />
          <div className={clsx("h-4 border-t border-black/30", hot ? "bg-[#dd6a60]" : "bg-[#8a2b24]")} />
        </div>
      );
    })}
    <Grid faint />
  </Lane>
);

const INST_STRIPES: { y: number; color: string; spans: number[][] }[] = [
  { y: 11, color: "#c0a077", spans: [[53, 69], [84.5, 107]] },
  { y: 15, color: "#757573", spans: [[FIRST_BAR, 52.5], [69, 84.5], [88.4, 89.2], [96.4, 97.2]] },
  { y: 20, color: "#55b461", spans: [[FIRST_BAR, 20.95], [53, 65], [69, 73], [101, 107]] },
  { y: 24, color: "#dbba5e", spans: HOWLING.map((h) => [h.from, h.to]) },
  { y: 29, color: "#3fa391", spans: [[53, 67], [84, 107]] },
  { y: 33, color: "#5db9f2", spans: [[FIRST_BAR, 53], [65, 85]] },
];

const InstLane = () => (
  <Lane bg="bg-[#62704f]">
    <svg
      viewBox={`${FIRST_BAR} 0 ${BAR_SPAN} 40`}
      preserveAspectRatio="none"
      className="absolute inset-0 h-full w-full"
      shapeRendering="crispEdges"
    >
      <rect x={FIRST_BAR} y={0} width={33} height={10} fill="#9ba380" />
      <rect x={FIRST_BAR} y={10} width={32.67} height={30} fill="#6b7161" />
      <rect x={53} y={0} width={48} height={10} fill="#90aa79" />
      <rect x={101} y={0} width={6} height={10} fill="#7dac7c" />
      <rect x={101} y={10} width={6} height={30} fill="#587a55" />
      {INST_STRIPES.map((s) =>
        s.spans.map(([a, b]) => (
          <rect key={`${s.y}-${a}`} x={a} y={s.y} width={b - a} height={s.y === 33 ? 5 : 4} fill={s.color} />
        ))
      )}
      {[53, 101].map((b) => (
        <rect key={b} x={b - 0.06} y={0} width={0.1} height={40} fill="#000" />
      ))}
    </svg>
    <Grid faint />
  </Lane>
);

const BassClip: React.FC<{ from: number; to: number; selected?: boolean; alt?: boolean }> = ({ from, to, selected, alt }) => {
  const len = to - from;
  const blocks = alt
    ? [[3, 4, 1], [4, 4.2, 0], [7.55, 8, 0]]
    : [[0, 0.2, 0], [3.35, 3.95, 1], [4, 4.2, 0], [7.5, 8, 0]];
  return (
    <div
      className={clsx("absolute inset-y-0 overflow-hidden rounded-t-[3px]", selected ? "border border-white" : "border-r border-black/70")}
      style={{ left: pct(from), width: span(len) }}
    >
      <svg viewBox={`0 0 ${len} 40`} preserveAspectRatio="none" className="h-full w-full" shapeRendering="crispEdges">
        <rect width={len} height={10} fill="#d6692e" />
        <rect y={10} width={len} height={10} fill="#f0642d" />
        <rect y={20} width={len} height={20} fill="#964719" />
        <rect y={10} width={len} height={1} fill="#a84d20" />
        <rect y={29} width={len} height={1} fill="#83401a" />
        {blocks
          .filter(([a]) => a < len)
          .map(([a, b, green]) => (
            <rect key={a} x={a} y={green ? 30 : 20} width={b - a} height={green ? 9 : 10} fill={green ? "#459e4c" : "#d39e38"} />
          ))}
      </svg>
    </div>
  );
};

const BassLane = () => (
  <Lane>
    <Grid />
    <BassClip from={29} to={37} />
    <BassClip from={37} to={45} />
    <BassClip from={45} to={52.25} />
    {[52.25, 52.45, 52.65].map((b) => (
      <div key={b} className="absolute inset-y-0 border-r border-black/60 bg-linear-to-b from-[#d6592e] to-[#8a3b1c]" style={{ left: pct(b), width: span(0.2) }} />
    ))}
    <BassClip from={69} to={77} alt />
    <BassClip from={77} to={84.5} />
    {[88.4, 96.4].map((b) => (
      <div key={b} className="absolute inset-y-0 flex overflow-hidden rounded-t-xs" style={{ left: pct(b), width: span(0.83) }}>
        <div className="flex flex-[3] flex-col">
          <span className="h-2.5 bg-[#459e4c]" />
          <span className="h-5 bg-[#276b30]" />
          <span className="h-2.5 bg-[#459e4c]" />
        </div>
        <div className="flex flex-1 flex-col border-l border-black">
          <span className="h-2.5 bg-[#b5882f]" />
          <span className="h-2.5 bg-[#7e5f22]" />
          <span className="h-2.5 bg-[#d8a23a]" />
          <span className="h-2.5 bg-[#7e5f22]" />
        </div>
      </div>
    ))}
    <Grid faint />
    <BassClip from={21} to={29} selected />
  </Lane>
);

const MidiLane: React.FC<{ clips: Clip[]; notes: Note[]; color: string; ink: string; light?: boolean }> = ({
  clips,
  notes,
  color,
  ink,
  light,
}) => (
  <Lane>
    <Grid />
    {clips.map((clip) => (
      <ClipBox key={clip.from} clip={clip} color={color} light={light} />
    ))}
    <Grid faint />
    <Notes notes={notes} color={ink} />
  </Lane>
);

const TrackLanes = () => (
  <>
    <DrumsLane />
    <InstLane />
    <MidiLane clips={REESE} notes={REESE_NOTES} color={C.tan} ink="#6d5637" />
    <BassLane />
    <MidiLane clips={WIND} notes={WIND_NOTES} color={C.green} ink="#2a6a35" />
    <MidiLane clips={HOWLING} notes={HOWLING_NOTES} color={C.yellow} ink="#806629" />
    <MidiLane clips={DRIFTING} notes={DRIFTING_NOTES} color={C.teal} ink="#1d5a50" light />
    <Lane>
      <Grid />
      {PIANO.map((clip) => (
        <ClipBox key={clip.from} clip={clip} color={C.blue} split />
      ))}
      <Grid faint />
    </Lane>
    {[audioClips("LR", "LR", "Piano LR 2-bou"), audioClips("Pedal", "Pedal M", "Piano Pedal 2-b")].map((clips, i) => (
      <Lane key={i} bg="bg-[#20292b]">
        <Grid />
        {clips.map((clip) => (
          <ClipBox key={clip.from} clip={clip} color={C.blue} />
        ))}
        <Grid faint />
        <Waveforms seed={i * 31} />
      </Lane>
    ))}
  </>
);

/* ------------------------------------------------------------------ */
/* Ruler                                                                */
/* ------------------------------------------------------------------ */

const MARKERS: [number, string][] = [[21, "Chorus 1"], [37, "1B"], [53, "Bridge"], [69, "Chorus 2"], [85, "2B"], [101, "Outro"]];
const TIMES = Array.from({ length: 24 }, (_, i) => 30 + i * 5);
const secToBar = (s: number) => 1 + (s * 170) / 240;

const Ruler: React.FC = () => (
  <div className="relative h-[51px] overflow-hidden bg-[#201f1d]">
    <div className="absolute inset-x-0 top-[30px] h-2.5 bg-[#33331d]" />
    <svg
      viewBox={`${FIRST_BAR} 0 ${BAR_SPAN} 51`}
      preserveAspectRatio="none"
      className="absolute inset-0 h-full w-full"
      shapeRendering="crispEdges"
    >
      {Array.from({ length: 120 }, (_, i) => 28 + i).map((s) => (
        <rect key={s} x={secToBar(s)} y={s % 5 ? 0 : 3} width={0.06} height={s % 5 ? 2 : 8} fill="#6b6a66" />
      ))}
      {BARS.map((b) => (
        <rect key={b} x={b - 0.03} y={b % 2 ? 17 : 30} width={0.06} height={b % 2 ? 32 : 19} fill={b % 8 === 5 ? "#8d8b80" : "#5c5b52"} />
      ))}
    </svg>
    {TIMES.map((s) => (
      <span key={s} className="absolute top-1 pl-[3px] text-[9px] leading-[10px] text-[#a3a19c]" style={{ left: pct(secToBar(s)) }}>
        {Math.floor(s / 60)}:{String(s % 60).padStart(2, "0")}
      </span>
    ))}
    {BARS.filter((b) => b % 2).map((b) => (
      <span key={b} className="absolute top-[18px] pl-0.5 text-[10px] leading-3 text-[#b9b7b2]" style={{ left: pct(b) }}>
        {b}
      </span>
    ))}
    {MARKERS.map(([b, label]) => (
      <span
        key={b}
        className="absolute top-[30px] border-l-2 border-[#d7d33c] pl-[3px] text-[10px] leading-[10px] whitespace-nowrap text-[#b9b7a8]"
        style={{ left: pct(b) }}
      >
        {label}
      </span>
    ))}
    <div className="absolute top-[41px] h-2 border border-[#7c7b78] bg-[#8a8a88]/40" style={{ left: pct(45.75), width: span(12) }} />
    <svg viewBox="0 0 8 11" className="absolute top-[15px] h-[11px] w-2" style={{ left: pct(21) }} fill="#c3c7d6">
      <path d="M0 0l8 5.500L0 11z" />
    </svg>
  </div>
);

/* ------------------------------------------------------------------ */
/* Overview strip under the timeline                                    */
/* ------------------------------------------------------------------ */

const OV_FIRST = -0.56;
const OV_SPAN = 151;
const ovPct = (bar: number) => `${((bar - OV_FIRST) / OV_SPAN) * 100}%`;

const OV_MARKERS: [number, string][] = [
  [1, "Start"], [5, "Intro"], [13, "Build"], [21, "Chorus 1"], [37, "1B"], [53, "Bridge"], [69, "Chorus 2"], [85, "2B"], [101, "Outro"], [121, "End"],
];

const OV_STRIPES: { y: number; h: number; color: string; spans: number[][] }[] = [
  { y: 3, h: 2, color: "#b5524a", spans: [[5, 9], [17, 117]] },
  { y: 6, h: 2, color: "#86876e", spans: [[1, 20], [53, 117]] },
  { y: 6, h: 1, color: "#4f7e68", spans: [[21, 53], [101, 118]] },
  { y: 9, h: 2, color: "#c0602f", spans: [[11, 13], [21, 52], [69, 84.5], [115, 117]] },
  { y: 12, h: 2, color: "#5e9a5a", spans: [[16, 20], [53, 65], [101, 113]] },
  { y: 14, h: 2, color: "#c2a860", spans: [[4, 5], [17, 21], ...HOWLING.slice(1).map((h) => [h.from, h.to])] },
  { y: 17, h: 1, color: "#3a7d70", spans: [[53, 67], [84, 113]] },
  { y: 19, h: 6, color: "#3f80b0", spans: [[5, 53], [73, 83.25]] },
  { y: 19, h: 6, color: "#a392a8", spans: [[1, 5], [65, 73], [83.25, 85], [113, 118]] },
];

const Overview: React.FC = () => (
  <div className="relative h-full flex-1 overflow-hidden">
    <svg
      viewBox={`${OV_FIRST} 0 ${OV_SPAN} 27`}
      preserveAspectRatio="none"
      className="absolute inset-0 h-full w-full"
      shapeRendering="crispEdges"
    >
      {OV_STRIPES.map((s, i) =>
        s.spans.map(([a, b]) => <rect key={`${i}-${a}`} x={a} y={s.y} width={b - a} height={s.h} fill={s.color} />)
      )}
      <rect x={30.8} y={1} width={0.2} height={25} fill="#999" />
    </svg>
    <div className="absolute top-px bottom-px rounded-sm border border-white/15 bg-white/10" style={{ left: ovPct(19.3), width: `${(88.2 / OV_SPAN) * 100}%` }} />
    {OV_MARKERS.map(([b, label]) => (
      <span key={b} className="absolute top-px flex h-[25px] items-center border-l-2 border-[#a3a134] pb-1" style={{ left: ovPct(b) }}>
        <span className="ml-px bg-[#262522]/80 px-px text-[10px] leading-3 whitespace-nowrap text-[#a9a7a2]">{label}</span>
      </span>
    ))}
  </div>
);

/* ------------------------------------------------------------------ */
/* Arranger                                                             */
/* ------------------------------------------------------------------ */

const SIDE_TOOLS = [
  <path key="a" d="M3 0l8 8H7.500l2 4-2 1-2-4L3 11z" fill="#eba94e" stroke="none" />,
  <path key="b" d="M3 1q3 0 4 1.500Q8 1 11 1M7 2v10M3 13q3 0 4-1.500Q8 13 11 13" />,
  <path key="c" d="M4 12l-.5-3.500L8 1.500l3 1.500-4.500 8zM7 4l3 1.500" />,
  <path key="d" d="M5.500 6h5v7h-5zM6.500 6V4h3v2M8 4V2M2 2h1M4 4h1M2 5h1" />,
  <path key="e" d="M2 1l4 3 6 7-1 2-7-5z" fill="currentColor" />,
  <path key="f" d="M5 1h6l-2 8H3zM3 9l-.5 3.500h6L9 9" />,
  <path key="g" d="M1 5h3l4-3v10L4 9H1zM10 5v4M12 4v6" fill="currentColor" />,
];

const Arranger: React.FC = () => (
  <section className="flex min-h-0 flex-1 rounded-md border border-[#6c6b66] bg-[#262522] pt-px pl-px">
    <div className="flex min-w-0 flex-1 flex-col">
      <div className="relative flex min-h-0 flex-1 overflow-hidden bg-black">
        {/* Track headers */}
        <div className="flex w-[186px] shrink-0 flex-col border-r border-black">
          <div className="flex h-[51px] shrink-0 border-b border-black bg-[#2c2b28]">
            <button aria-label="Add to project" className="flex w-[15px] items-end justify-center rounded-tl-sm bg-[#6bc4fb] pb-1 text-sm leading-3 text-[#16324a]">
              +
            </button>
            <div className="flex flex-1 items-center pr-2 pl-1">
              <ProjectIcon className="h-4 w-3.5" />
              <span className="ml-1.5 text-[10px] text-[#a9a7a2]">Project</span>
              <span className="mr-auto ml-4"><Caret /></span>
              <svg viewBox="0 0 76 14" className="h-3.5 w-[76px]" fill="#bdbbb6">
                {[0, 5, 10].map((x) => (
                  <path key={x} d={`M${x} 3h4v4h-4zM${x} 8h4v4h-4z`} />
                ))}
                <path d="M19 2.500h14v4H19zM19 8h14v4H19z" fill="#eba94e" />
                <path d="M43 1h12v12H43z" fill="none" stroke="#bdbbb6" strokeDasharray="2 1.500" />
                <path d="M45 11l8-8" stroke="#bdbbb6" strokeWidth="1.500" />
                <circle cx="46" cy="10" r="2" />
                <circle cx="52" cy="4" r="2" />
                <path d="M62 0h14v14H62z" />
                <path d="M65 11l3-5 4-3" stroke="#2c2b28" strokeWidth="1.500" fill="none" />
                <circle cx="66" cy="10" r="2" fill="#2c2b28" />
                <circle cx="72" cy="4" r="2" fill="#2c2b28" />
                <path d="M70 10h5M72.500 7.500v5" stroke="#2c2b28" />
              </svg>
            </div>
          </div>
          {TRACKS.map((track) => (
            <TrackHeader key={track.name} track={track} />
          ))}
          <button aria-label="Add track" className="flex h-[21px] shrink-0 items-center justify-center bg-[#0f0f0e] text-[#b9b7b2]">
            <svg viewBox="0 0 8 8" className="h-2 w-2" stroke="currentColor" strokeWidth="1.600">
              <path d="M4 0v8M0 4h8" />
            </svg>
          </button>
          {RETURNS.map((track, i) => (
            <TrackHeader key={track.name} track={track} clipped={i === RETURNS.length - 1} />
          ))}
        </div>

        {/* Timeline */}
        <div className="relative min-w-0 flex-1">
          <Ruler />
          <TrackLanes />
          <div className="relative h-[21px] bg-[#0f0f0e]" />
          <div className="relative h-[195px] bg-[#1e1d1a]">
            {[0, 1, 2, 3].map((i) => (
              <div key={i} className="h-[41px] border-b border-black/50" />
            ))}
            <Grid />
          </div>
          <div className="absolute top-[51px] bottom-0 w-0.5 bg-[#c9c8c4]/80" style={{ left: pct(30.74) }} />
          <div className="absolute top-0 right-0 h-[616px] w-1 bg-[#8a8986]/60" />
        </div>
      </div>
      <div className="relative flex h-7 shrink-0 items-center border-t border-[#1a1918] bg-[#22211f]">
        <div className="flex w-[185px] shrink-0 items-center gap-2 pb-1 pl-2.5 text-[#dc9d4a]">
          <svg viewBox="0 0 8 14" className="h-3.5 w-2" fill="none" stroke="#a9a7a2" strokeWidth="1.200">
            <path d="M0 .6h8M0 13.400h8M4 2v10M1.500 4.500L4 2l2.500 2.500M1.500 9.500L4 12l2.500-2.500" />
          </svg>
          <Return className="h-3 w-3" />
          <svg viewBox="0 0 10 10" className="h-2.5 w-2.5" stroke="currentColor" strokeWidth="1.300">
            <path d="M0 0l10 10M10 0L0 10" />
          </svg>
        </div>
        <Overview />
        <span className="absolute right-2.5 bottom-1.5 text-[11px] leading-4 text-[#a9a7a2]">1/4</span>
      </div>
    </div>

    <div className="flex w-6 shrink-0 flex-col items-center justify-between bg-[#262522] pt-1.5 pb-2">
      <div className="flex flex-col items-center gap-[5px]">
        {SIDE_TOOLS.map((shape, i) => (
          <button key={i} aria-label={`Tool ${i + 1}`} className="text-[#a9a7a2]">
            <svg viewBox="0 0 14 14" className="h-3.5 w-3.5" fill="none" stroke="currentColor" strokeWidth="1.100">
              {shape}
            </svg>
          </button>
        ))}
      </div>
      <div className="flex flex-col items-center gap-1.5 text-[#a9a7a2]">
        <svg viewBox="0 0 14 14" className="h-3 w-3.5" fill="none" stroke="#dc9d4a" strokeWidth="1.300">
          <path d="M3.500 3.500h7v7h-7zM3.500 0v2M10.500 0v2M3.500 12v2M10.500 12v2M0 3.500h2M12 3.500h2M0 10.500h2M12 10.500h2" />
        </svg>
        <svg viewBox="0 0 14 10" className="h-2.5 w-3.5" fill="none" stroke="#8d8b87" strokeWidth="1.200">
          <path d="M1 1l3.500 4L1 9M5 1l3.500 4L5 9M9 1l3.500 4L9 9" />
        </svg>
        <svg viewBox="0 0 16 16" className="h-4 w-4" fill="#c4c2be">
          <path d="M0 0h16v16H0z" />
          <path d="M2 4h12M2 8h12M2 12h12M10 2.500v3M6 6.500v3M11 10.500v3" stroke="#262522" strokeWidth="1.400" />
        </svg>
      </div>
    </div>
  </section>
);

/* ------------------------------------------------------------------ */
/* Mixer                                                                */
/* ------------------------------------------------------------------ */

type Device = { name: string; voice?: boolean };

interface Channel {
  name: string;
  color: string;
  ink: string;
  bars?: string[];
  icon?: "folder" | "open";
  shape?: string;
  devices: Device[];
  latency?: string;
  eq?: boolean;
  send?: "on" | "off" | "loop" | "none";
  knob?: number;
  knob2?: number;
  blue?: boolean;
  arrow?: boolean;
  input: string;
  output: string;
  unarmed?: boolean;
  peakDb?: string;
  db: string;
  fader: number;
  meter?: [number, number];
  peak?: [number, number];
}

const S = C.silver;
const B = C.blue;

const CHANNELS: Channel[] = [
  { name: "Drums", color: C.red, ink: "#f6e9e6", icon: "folder", shape: "rounded-t-lg", devices: [{ name: "Perform FX" }, { name: "Distortion" }], input: "No input", output: "Master", unarmed: true, peakDb: "-4.7", db: "−5.6 dB", fader: 20, meter: [41, 41], peak: [23, 23] },
  { name: "Inst", color: S, ink: "#4a4948", icon: "open", shape: "rounded-tl-lg", devices: [{ name: "corealis sc" }], latency: "0.5 ms", input: "No input", output: "Master", unarmed: true, peakDb: "-2.7", db: "0.0 dB", fader: 6, meter: [31, 31], peak: [23, 24] },
  { name: "Reese", color: C.tan, ink: "#4a3b25", bars: [S], devices: [{ name: "Polysynth", voice: true }], latency: "0.7 ms", send: "on", knob: -20, input: "All ins", output: "Inst Master", db: "−13.5 dB", fader: 39 },
  { name: "Bass Bus", color: C.gray, ink: "#f0efee", bars: [S], icon: "folder", shape: "rounded-t-lg", devices: [{ name: "FX Layer" }, { name: "Saturator" }], input: "All ins", output: "Inst Master", peakDb: "-8.6", db: "−8.3 dB", fader: 27, meter: [31, 31] },
  { name: "Wind", color: C.green, ink: "#1f4a26", bars: [S], devices: [{ name: "Poly Grid", voice: true }], latency: "0.7 ms", send: "on", knob: 0, knob2: 10, input: "All ins", output: "Inst Master", db: "−16.5 dB", fader: 46 },
  { name: "Howling Lead", color: C.yellow, ink: "#4d3f1a", bars: [S], devices: [{ name: "Phase-4" }], latency: "0.5 ms", send: "on", knob: -12, knob2: 90, input: "All ins", output: "Inst Master", peakDb: "-12.4", db: "−7.5 dB", fader: 25, meter: [65, 68], peak: [57, 62] },
  { name: "Drifting Chords", color: C.teal, ink: "#e4f5f1", bars: [S], devices: [{ name: "Polysynth", voice: true }], latency: "0.5 ms", send: "on", knob: 28, knob2: 25, input: "All ins", output: "Inst Master", db: "−17.0 dB", fader: 47 },
  { name: "Piano", color: B, ink: "#26465c", bars: [S], icon: "open", shape: "rounded-tl-lg", devices: [{ name: "Chain" }, { name: "Ladder" }], send: "on", knob: 35, blue: true, input: "All ins", output: "Inst Master", peakDb: "-4.6", db: "−1.2 dB", fader: 9, meter: [50, 50], peak: [32, 29] },
  { name: "LR", color: B, ink: "#26465c", bars: [S, B], devices: [{ name: "Time Shift" }, { name: "Tool" }], input: "Left/Right", output: "PianoMst", peakDb: "-8.2", db: "−6.0 dB", fader: 21, meter: [53, 53], peak: [43, 42] },
  { name: "Pedal Mic", color: B, ink: "#26465c", bars: [S, B], devices: [{ name: "Tool" }, { name: "EQ+" }], eq: true, input: "Left/Right", output: "PianoMst", peakDb: "-14.4", db: "−10.7 dB", fader: 32, meter: [59, 59], peak: [52, 52] },
];

const W = "#efeeed";
const G = "#7b7a79";

const RETURN_CHANNELS: Channel[] = [
  { name: "Small Room", color: G, ink: W, devices: [{ name: "Convolution" }], latency: "0.5 ms", send: "loop", input: "Left/Right", output: "RvbSends", peakDb: "-14.3", db: "0.0 dB", fader: 6, meter: [69, 67], peak: [54, 51] },
  { name: "Gated Reverb", color: G, ink: W, devices: [{ name: "Convolution" }], arrow: true, input: "Left/Right", output: "RvbSends", peakDb: "-19.9", db: "0.0 dB", fader: 6, meter: [75, 71], peak: [67, 65] },
  { name: "Falling Verb", color: G, ink: W, devices: [{ name: "Vocoder" }, { name: "Reverb" }], arrow: true, input: "Left/Right", output: "RvbSends", peakDb: "-28.3", db: "0.0 dB", fader: 6, meter: [85, 82], peak: [78, 76] },
  { name: "Long Plate", color: G, ink: W, devices: [{ name: "Convolution" }], arrow: true, input: "Left/Right", output: "RvbSends", peakDb: "-33.0", db: "0.0 dB", fader: 6, meter: [88, 89], peak: [78, 80] },
  { name: "Time Dilation 03", color: G, ink: W, devices: [{ name: "Convolution" }], arrow: true, input: "Left/Right", output: "RvbSends", peakDb: "-18.0", db: "−3.3 dB", fader: 15, meter: [89, 89], peak: [74, 72] },
  { name: "Reverb Sends", color: C.dark, ink: W, devices: [{ name: "corealis sc" }], latency: "0.5 ms", arrow: true, input: "Left/Right", output: "Master", peakDb: "-12.2", db: "0.0 dB", fader: 6, meter: [69, 66], peak: [58, 57] },
  { name: "Master", color: C.dark, ink: W, devices: [{ name: "Perform FX" }, { name: "EQ+" }], eq: true, send: "none", input: "All ins", output: "Studio", peakDb: "+0.0", db: "0.0 dB", fader: 6, meter: [21, 21], peak: [10, 9] },
];

const polar = (deg: number, r: number) => {
  const a = ((deg - 90) * Math.PI) / 180;
  return `${(12 + r * Math.cos(a)).toFixed(2)} ${(12 + r * Math.sin(a)).toFixed(2)}`;
};

const Knob: React.FC<{ angle?: number; on?: boolean; blue?: boolean; bright?: boolean }> = ({ angle = -140, on, blue, bright }) => (
  <svg viewBox="0 0 24 24" className="h-6 w-6 shrink-0">
    <path d={`M${polar(-140, 10.8)}A10.800 10.800 0 1 1 ${polar(140, 10.8)}`} fill="none" stroke={on ? "#4a4946" : "#3e3d3a"} strokeWidth="2" />
    {on && (
      <path
        d={`M${polar(-140, 10.8)}A10.800 10.800 0 ${angle + 140 > 180 ? 1 : 0} 1 ${polar(angle, 10.8)}`}
        fill="none"
        stroke="#e3dc45"
        strokeWidth="2"
      />
    )}
    <circle cx="12" cy="12" r="8" fill={bright ? "#8b8a87" : on ? "#63625f" : "#565552"} />
    <path d={`M${polar(angle, 3)}L${polar(angle, 7.5)}`} stroke={on ? "#f4f3ef" : bright ? "#1c1b19" : "#a09e9a"} strokeWidth="2" />
    {blue && <circle cx="21" cy="3.500" r="3" fill="#4a90d9" />}
  </svg>
);

const DeviceDot: React.FC<{ voice?: boolean }> = ({ voice }) => (
  <svg viewBox="0 0 8 8" className="h-[7px] w-[7px] shrink-0" fill="#d8a352">
    {voice ? <path d="M2 0a4 4 0 1 0 6 6A5 5 0 0 1 2 0z" /> : <circle cx="4" cy="4" r="3.800" />}
  </svg>
);

const DeviceRow: React.FC<{ device: Device; chevron?: boolean; eq?: boolean }> = ({ device, chevron, eq }) => (
  <div className="relative flex h-[17px] items-center gap-1.5 border-b border-[#1c1b19] bg-[#302f2c] pl-[3px] text-[9px] text-[#a3a19c]">
    <DeviceDot voice={device.voice} />
    {device.name}
    {chevron && (
      <svg viewBox="0 0 8 5" className="absolute top-2.5 left-9 h-[5px] w-2" fill="none" stroke="#dddbd7" strokeWidth="1.300">
        <path d="M0.500 0.500L4 4 7.500 0.500" />
      </svg>
    )}
    {eq && (
      <svg viewBox="0 0 26 6" className="absolute right-0.5 h-1.5 w-[26px]" fill="none" stroke="#a3a19c" strokeWidth="1.200">
        <path d="M0 3h6q3 1.500 6 0h14" />
      </svg>
    )}
  </div>
);

const Routing: React.FC<{ label: string; value: string; icon: React.ReactNode }> = ({ label, value, icon }) => (
  <label className="flex h-[17px] items-center pr-1 pl-[5px] text-[10px] text-[#b5b3ae]">
    <span className="flex w-2.5 shrink-0 justify-center text-[#a3a19c]">{icon}</span>
    <select aria-label={label} className="ml-0.5 min-w-0 flex-1 appearance-none bg-transparent outline-none">
      <option>{value}</option>
    </select>
    <Caret />
  </label>
);

const SCALE: [string, string][] = [
  ["0", "h-3.5"], ["6", "h-3.5"], ["12", "h-3.5"], ["18", "h-[13px]"], ["24", "h-3"], ["36", "h-6"], ["∞", "h-5"],
];

const MeterChart: React.FC<{ channel: Channel }> = ({ channel }) => {
  const { meter, peak, name, fader, db } = channel;
  const id = `grad-${name.replace(/\s/g, "")}`;
  const level = (y: number) => (y < 24 ? "#c4655c" : y < 52 ? "#d18a55" : y < 60 ? "#cdb25a" : "#86a876");
  return (
    <div className="relative flex min-w-0 flex-1 items-start">
      <svg viewBox="0 0 48 111" className="h-[111px] w-12">
        <defs>
          <linearGradient id={id} gradientUnits="userSpaceOnUse" x1="0" x2="0" y1="15" y2="104">
            <stop offset="0" stopColor="#bd524b" />
            <stop offset="0.230" stopColor="#c5665a" />
            <stop offset="0.390" stopColor="#d9a556" />
            <stop offset="0.500" stopColor="#8fb06a" />
            <stop offset="0.800" stopColor="#6c9b62" />
            <stop offset="1" stopColor="#466f5c" />
          </linearGradient>
        </defs>
        {[7, 21, 35, 49, 61, 79].map((y) => (
          <rect key={y} x="0" y={y} width="3" height="1" fill="#8d8b87" />
        ))}
        {[70, 84, 88, 91, 94, 97, 100].map((y) => (
          <rect key={y} x="1" y={y} width="2" height="1" fill="#6c6b68" />
        ))}
        <path d="M5 0h12v104H5z" fill="#222221" />
        {meter?.map((y, i) => (
          <rect key={i} x={5 + i * 6} y={y} width="5.500" height={104 - y} fill={`url(#${id})`} />
        ))}
        {peak?.map((y, i) => (
          <rect key={i} x={5 + i * 6} y={y} width="5" height="1.300" fill={level(y)} />
        ))}
        <rect x="18" y={fader} width="29" height={104 - fader} fill="#654e2d" />
        <rect x="18" y={fader} width="29" height="1.400" fill="#c0924a" />
      </svg>
      <input type="range" min={-60} max={6} defaultValue={parseFloat(db.replace("−", "-"))} aria-label={`${name} volume`} className="absolute inset-0 h-full w-full opacity-0" />
    </div>
  );
};

const MixerChannel: React.FC<{ channel: Channel; last?: boolean }> = ({ channel, last }) => {
  const { name, color, ink, bars = [], icon, devices, send = "off" } = channel;
  return (
    <div className="flex min-w-0 flex-1 flex-col border-r border-black bg-[#2f2e2b]">
      <div className={clsx("flex h-[76px] flex-col", bars.length > 0 && "bg-black")}>
        {bars.map((bar, i) => (
          <div
            key={i}
            className={clsx("h-2.5 shrink-0", last && "rounded-tr-lg", !(name === "Piano" && i === 1) && "-ml-px")}
            style={{ backgroundColor: bar }}
          />
        ))}
        <div
          className={clsx(
            "flex flex-1 flex-col items-center justify-center gap-1 text-center text-[10px] leading-3 whitespace-pre-line",
            channel.shape,
            bars.length > 0 && "border-t border-black"
          )}
          style={{ backgroundColor: color, color: ink }}
        >
          <span>{name.replace(" ", "\n")}</span>
          {icon === "folder" && <Folder className="h-2.5 w-3" />}
          {icon === "open" && <FolderOpen className="h-2.5 w-3.5 text-[#2a2c2e]" />}
        </div>
      </div>

      <div className="h-[41px] overflow-hidden border-b border-[#1c1b19] bg-[#191816]">
        <DeviceRow device={devices[0]} />
        {devices[1] ? (
          <DeviceRow device={devices[1]} chevron eq={channel.eq} />
        ) : (
          <div className="flex h-[17px] items-center justify-between px-[3px] text-[9px] text-[#a3a19c]">
            <svg viewBox="0 0 8 8" className="h-2 w-2" stroke="#b9b7b2" strokeWidth="1.800">
              <path d="M4 0v8M0 4h8" />
            </svg>
            {channel.latency}
          </div>
        )}
      </div>

      <div className={clsx("h-9 overflow-hidden bg-[#2b2a27]", send === "none" && "bg-[#282725]")}>
        {send !== "none" && (
          <>
            <div className="flex h-8 items-center justify-between pr-[3px] pl-[3px]">
              {send === "loop" ? (
                <LoopIcon className="ml-4 h-3 w-3.5 text-[#5b5a57]" />
              ) : (
                <span className={clsx("flex items-center text-[9px] whitespace-nowrap", send === "on" ? "text-[#f4f2ee]" : "text-[#5f5e5a]")}>
                  {channel.arrow && (
                    <svg viewBox="0 0 3 6" className="h-1.5 w-[3px]" fill="currentColor">
                      <path d="M3 0v6L0 3z" />
                    </svg>
                  )}
                  Small Room
                </span>
              )}
              <Knob angle={channel.knob} on={send === "on"} blue={channel.blue} bright={send === "loop"} />
            </div>
            <div className="flex h-1 items-start justify-end overflow-hidden pr-[3px]">
              <Knob angle={channel.knob2} on={channel.knob2 !== undefined} blue={channel.blue} />
            </div>
          </>
        )}
      </div>

      <div className="h-10 bg-[#353431]">
        <Routing
          label={`${name} input`}
          value={channel.input}
          icon={
            name === "Master" ? (
              <span className="flex h-2.5 w-2.5 shrink-0 items-center justify-center rounded-full border-2 border-[#e0b040]">
                <Speaker className="h-1.5 w-1" />
              </span>
            ) : (
              <Speaker />
            )
          }
        />
        <Routing label={`${name} output`} value={channel.output} icon={<Wave className="h-2.5 w-2.5" />} />
      </div>

      <div className="px-[3px]">
        <ArmSoloMute name={name} unarmed={channel.unarmed} tall />
        <label className="mt-[5px] flex h-[18px] items-center bg-[#1a1918]">
          <input
            type="range"
            min={-100}
            max={100}
            defaultValue={0}
            aria-label={`${name} pan`}
            className="h-4 w-full appearance-none bg-transparent [&::-webkit-slider-thumb]:h-4 [&::-webkit-slider-thumb]:w-0.5 [&::-webkit-slider-thumb]:appearance-none [&::-webkit-slider-thumb]:bg-[#e0a04a]"
          />
        </label>
        <div className="mt-1 bg-[#1a1918]">
          <div className="flex h-[18px] items-center justify-between border-b border-[#262523] pr-1 pl-0.5 text-[9px] text-[#b5b3ae]">
            <span>{channel.peakDb}</span>
            <span className="text-[#dc9d4a]">{channel.db}</span>
          </div>
          <div className="flex pt-2">
            <div className="w-5 shrink-0 text-right text-[9px] leading-3 text-[#a3a19c]">
              {SCALE.map(([label, h]) => (
                <div key={label} className={clsx("flex items-center justify-end pr-1", h)}>
                  {label}
                </div>
              ))}
            </div>
            <MeterChart channel={channel} />
          </div>
        </div>
      </div>
      <div className="mt-0.5 h-[5px]" style={{ backgroundColor: color }} />
    </div>
  );
};

const MixerSide: React.FC = () => (
  <div className="flex w-[81px] shrink-0 flex-col bg-[#262522] text-[10px] text-[#a9a7a2]">
    <div className="h-[188px] bg-[#31302d]">
      <div className="flex h-[76px] items-center pr-2 pl-[7px]">
        <ProjectIcon className="h-[15px] w-3.5" />
        <span className="ml-1">Project</span>
        <span className="ml-auto"><Caret /></span>
      </div>
      <div className="flex h-[41px] items-center justify-center text-[9px]">Devices</div>
      <div className="flex h-9 items-center justify-center text-[9px]">Sends</div>
      <div className="flex h-[35px] items-center justify-center text-[9px]">I/O</div>
    </div>
    <div className="mt-1 flex items-center justify-center gap-2 pl-1 text-[#5f5e5a]">
      <svg viewBox="0 0 10 10" className="h-2.5 w-2.5" fill="currentColor">
        <circle cx="4" cy="4" r="4" />
        <path d="M6 6l4 4M10 6l-4 4" stroke="currentColor" strokeWidth="1.300" />
      </svg>
      <span className="font-bold">Sₓ</span>
      <span className="font-bold">Mₓ</span>
    </div>
    <div className="mt-auto mb-[26px] grid grid-cols-[12px_12px] justify-center gap-x-[7px] gap-y-2">
      <svg viewBox="0 0 12 12" className="h-3 w-3" fill="#dc9d4a">
        <path d="M1 2h10v8H1z" fill="none" stroke="#dc9d4a" />
        <path d="M1 2h6v8H1z" />
      </svg>
      <svg viewBox="0 0 12 12" className="h-3 w-3" fill="#c4c2be">
        <circle cx="6" cy="6" r="5" />
        <path d="M6 6V2" stroke="#262522" strokeWidth="1.500" />
      </svg>
      <svg viewBox="0 0 12 12" className="h-3 w-3" fill="none" stroke="#dc9d4a" strokeWidth="1.300">
        <path d="M1 10h3q3 0 3-3V2M4.500 4.500L7 2l3 2.500" />
      </svg>
      <Return className="h-3 w-3 text-[#dc9d4a]" />
      <svg viewBox="0 0 12 12" className="h-3 w-3" fill="none" stroke="#dc9d4a" strokeWidth="1.300">
        <path d="M11 4H2M4 1L1.500 4 4 6M3 9h7M8 6.500l2.500 2.500L8 11.500" />
      </svg>
      <svg viewBox="0 0 12 12" className="h-3 w-3" stroke="#dc9d4a" strokeWidth="1.300">
        <path d="M1.500 1.500l9 9M10.500 1.500l-9 9" />
      </svg>
      <span className="text-[9px] leading-3 font-bold text-[#c4c2be]">AB</span>
      <svg viewBox="0 0 12 12" className="h-3 w-3" fill="#c4c2be">
        <path d="M0 0h12v9H7l-1 3-2-3H0z" />
        <path d="M2.500 3h7M2.500 6h7" stroke="#262522" />
      </svg>
    </div>
  </div>
);

const Mixer: React.FC = () => (
  <section className="mt-1 flex shrink-0 overflow-hidden bg-[#0c0c0b]">
    <MixerSide />
    <div className="flex min-w-0 flex-[10]">
      {CHANNELS.map((channel) => (
        <MixerChannel key={channel.name} channel={channel} last={channel.name === "Pedal Mic"} />
      ))}
    </div>
    <div className="min-w-0 flex-[4] pt-[31px]">
      <button aria-label="Add channel" className="ml-0.5 flex h-4 w-2.5 items-center text-[#c4c2be]">
        <svg viewBox="0 0 10 10" className="h-2.5 w-2.5" stroke="currentColor" strokeWidth="1.600">
          <path d="M5 0v10M0 5h10" />
        </svg>
      </button>
    </div>
    <div className="flex min-w-0 flex-[7]">
      {RETURN_CHANNELS.map((channel) => (
        <MixerChannel key={channel.name} channel={channel} />
      ))}
    </div>
  </section>
);

/* ------------------------------------------------------------------ */
/* Footer                                                               */
/* ------------------------------------------------------------------ */

const Sep = () => <span className="block h-3.5 w-0.5 bg-[#8d8b87]" />;

const Footer: React.FC = () => (
  <footer className="flex h-[35px] shrink-0 items-center justify-between border-t border-[#33322f] bg-[#262522] px-4 pt-1 text-[10px] text-[#a9a7a2]">
    <div className="flex items-center">
      <span className="w-5 font-mono text-xs font-bold text-[#eba94e]">i</span>
      <Sep />
      <nav className="ml-3 flex gap-[11px]">
        <a href="#arrange" className="font-bold text-[#eba94e]">ARRANGE</a>
        <a href="#mix" className="font-bold">MIX</a>
        <a href="#edit" className="font-bold">EDIT</a>
      </nav>
      <span className="ml-3"><Sep /></span>
      <svg viewBox="0 0 12 12" className="ml-3 h-2.5 w-2.5" fill="#bdbbb6">
        <path d="M0 1h4v2H0zM4 5h4v2H4zM7 2h4v2H7zM0 9h4v2H0zM8 9h4v2H8z" />
      </svg>
      <svg viewBox="0 0 12 12" className="ml-3.5 h-3 w-3" fill="#8d8b87">
        <path d="M0.500 1h11v10h-11z" stroke="#bdbbb6" fill="none" />
        <path d="M1 1h7v10H1z" fill="#bdbbb6" />
      </svg>
      <svg viewBox="0 0 14 12" className="ml-3 h-3 w-3.5" stroke="#eba94e" strokeWidth="1.300">
        <path d="M2 0v12M7 0v12M12 0v12M0 8h4M5 4h4M10 7h4" />
      </svg>
    </div>
    <div className="-mr-0.5 flex items-center gap-3 text-[#bdbbb6]">
      <svg viewBox="0 0 14 14" className="h-3.5 w-3.5" fill="none" stroke="currentColor" strokeWidth="1.400">
        <circle cx="6" cy="6" r="4.500" />
        <path d="M9.500 9.500L13 13" strokeWidth="2" />
      </svg>
      <svg viewBox="0 0 12 14" className="h-3.5 w-3" fill="currentColor">
        <path d="M1 1h5v5h5v7H1zM7.500 1L11 4.500H7.500z" />
      </svg>
      <svg viewBox="0 0 14 16" className="h-4 w-3.5" fill="currentColor">
        <rect x="1" y="0" width="12" height="16" rx="2.500" />
        <circle cx="7" cy="10" r="3.500" fill="none" stroke="#262522" strokeWidth="1.400" />
        <circle cx="7" cy="3.500" r="1.300" fill="#262522" />
      </svg>
      <svg viewBox="0 0 14 14" className="h-3.5 w-3.5" fill="currentColor">
        <path d="M4 0q1.500 0 1.500 1.500V6l6.500 1q1.500.5 1.500 2l-1 5h-7L1 9q-1-1.500 0-2l1.500 1V1.500Q2.500 0 4 0z" />
      </svg>
      <Sep />
      <Keys className="h-3 w-3" />
    </div>
  </footer>
);

/* ------------------------------------------------------------------ */

export default function App() {
  return (
    <div className="flex h-screen min-w-[1500px] flex-col overflow-hidden bg-[#1e1d1a] font-['Lato','Noto_Sans',sans-serif] select-none">
      <div className="flex h-10 shrink-0 justify-end bg-black pt-3 pr-3">
        <span className="h-1.5 w-1.5 rounded-full bg-[#f0932b]" />
      </div>
      <Header />
      <main className="flex min-h-0 flex-1">
        <Inspector />
        <div className="relative mr-0.5 flex min-w-0 flex-1 flex-col">
          <Arranger />
          <Mixer />
        </div>
      </main>
      <Footer />
    </div>
  );
}
